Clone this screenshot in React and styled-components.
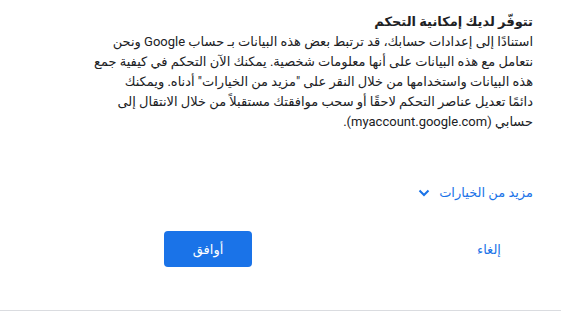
import React from "react";
import styled, { createGlobalStyle } from "styled-components";

const GlobalStyle = createGlobalStyle`
  html, body {
    margin: 0;
    padding: 0;
    background: #fff;
  }
  * {
    box-sizing: border-box;
  }
`;

const Page = styled.div`
  height: 311px;
  padding: 12px 28px 0 164px;
  border-bottom: 1px solid #dadce0;
  font-family: Roboto, "Liberation Sans", "DejaVu Sans", sans-serif;
  color: #202124;
  direction: rtl;
`;

const Title = styled.div`
  font-size: 13px;
  font-weight: 700;
  line-height: 20px;
`;

const Body = styled.div`
  font-size: 13px;
  line-height: 20px;
`;

// the lines are kept as in the original, the Arabic fallback font is wider
const Line = styled.span`
  display: block;
  white-space: nowrap;
`;

const MoreRow = styled.div`
  display: flex;
  margin-top: 51px;
  height: 20px;
`;

const MoreButton = styled.button`
  display: flex;
  align-items: center;
  gap: 9px;
  padding: 0;
  border: 0;
  background: none;
  font-family: inherit;
  font-size: 13px;
  line-height: 20px;
  color: #1a73e8;
  cursor: pointer;
`;

const Actions = styled.div`
  display: flex;
  justify-content: space-between;
  margin-top: 28px;
`;

const ActionButton = styled.button`
  width: 88px;
  height: 36px;
  border: 0;
  border-radius: 4px;
  font-family: inherit;
  font-size: 13px;
  background: ${(p) => (p.$primary ? "#1a73e8" : "transparent")};
  color: ${(p) => (p.$primary ? "#fff" : "#1a73e8")};
  cursor: pointer;
`;

const Chevron = () => (
  <svg width="12" height="8" viewBox="0 0 12 8" aria-hidden="true">
    <path d="M1.5 1.5 L6 6 L10.5 1.5" fill="none" stroke="#1a73e8" strokeWidth="2" />
  </svg>
);

const lines = [
  "استنادًا إلى إعدادات حسابك، قد ترتبط بعض هذه البيانات بـ حساب Google ونحن",
  "نتعامل مع هذه البيانات على أنها معلومات شخصية. يمكنك الآن التحكم في كيفية جمع",
  "هذه البيانات واستخدامها من خلال النقر على \"مزيد من الخيارات\" أدناه. ويمكنك",
  "دائمًا تعديل عناصر التحكم لاحقًا أو سحب موافقتك مستقبلاً من خلال الانتقال إلى",
  "حسابي (myaccount.google.com).",
];

export default function App() {
  return (
    <>
      <GlobalStyle />
      <Page>
        <Title>تتوفّر لديك إمكانية التحكم</Title>
        <Body>
          {lines.map((text) => (
            <Line key={text}>{text}</Line>
          ))}
        </Body>
        <MoreRow>
          <MoreButton>
            مزيد من الخيارات
            <Chevron />
          </MoreButton>
        </MoreRow>
        <Actions>
          <ActionButton>إلغاء</ActionButton>
          <ActionButton $primary>أوافق</ActionButton>
        </Actions>
      </Page>
    </>
  );
}
